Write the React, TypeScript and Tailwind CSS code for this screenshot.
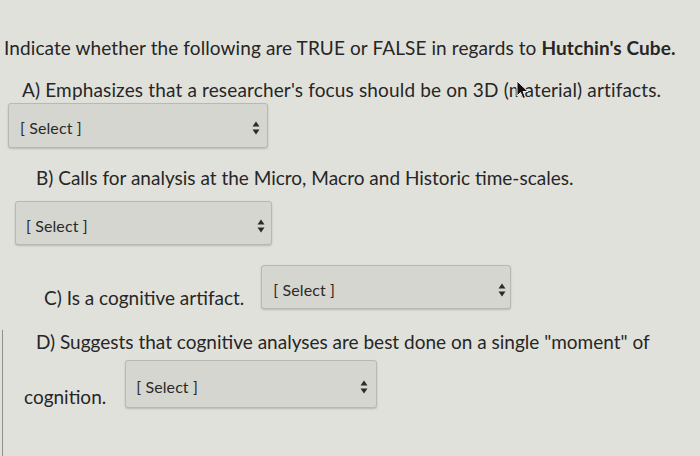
const font = { fontFamily: 'Lato, "Open Sans", sans-serif' };

function Arrows() {
  return (
    <svg width="8" height="14" viewBox="0 0 8 14" className="shrink-0">
      <path d="M4 0.5 L7.5 5.5 H0.5 Z" fill="#2b2b2b" />
      <path d="M4 13.5 L7.5 8.5 H0.5 Z" fill="#2b2b2b" />
    </svg>
  );
}

function SelectBox({ className }: { className: string }) {
  return (
    <div
      className={`flex items-center justify-between rounded-[3px] border border-[#b9b9b3] bg-[#d6d6d0] pt-[5px] shadow-[0_1px_2px_rgba(0,0,0,0.18)] ${className}`}
    >
      <span className="text-[16px] text-[#2a2a2a] tracking-[0.1px]">[ Select ]</span>
      <Arrows />
    </div>
  );
}

export default function App() {
  return (
    <div
      style={font}
      className="relative w-[700px] h-[456px] overflow-hidden bg-[#e1e1db] text-[#262626]"
    >
      <div className="absolute left-[2px] top-[330px] bottom-0 w-[1px] bg-[#8f8f8a]" />

      <div className="flex flex-col pt-[36px]">
        <p className="ml-[4px] text-[19px] leading-[24px] tracking-[0.1px]">
          Indicate whether the following are TRUE or FALSE in regards to{' '}
          <span className="font-bold">Hutchin's Cube.</span>
        </p>

        <p className="ml-[22px] mt-[18px] text-[19px] leading-[24px] tracking-[0.15px] relative">
          A) Emphasizes that a researcher's focus should be on 3D (material) artifacts.
          <svg
            width="14"
            height="20"
            viewBox="0 0 14 20"
            className="absolute left-[494px] top-[2px]"
          >
            <path
              d="M1 1 L1 16 L4.5 12.5 L7 18.5 L9.5 17.5 L7 11.5 L12 11.5 Z"
              fill="#111"
              stroke="#f0f0f0"
              strokeWidth="1"
            />
          </svg>
        </p>

        <SelectBox className="ml-[8px] mt-[1px] w-[260px] h-[45px] pl-[11px] pr-[7px]" />

        <p className="ml-[36px] mt-[18px] text-[19px] leading-[24px]">
          B) Calls for analysis at the Micro, Macro and Historic time-scales.
        </p>

        <SelectBox className="ml-[15px] mt-[11px] w-[257px] h-[44px] pl-[10px] pr-[6px]" />

        <div className="flex items-end mt-[20px]">
          <span className="ml-[44px] text-[19px] leading-[24px] mb-[-1px]">
            C) Is a cognitive artifact.
          </span>
          <SelectBox className="ml-[17px] w-[250px] h-[44px] pl-[11px] pr-[4px]" />
        </div>

        <p className="ml-[36px] mt-[21px] text-[19px] leading-[24px]">
          D) Suggests that cognitive analyses are best done on a single "moment" of
        </p>

        <div className="flex items-end mt-[6px]">
          <span className="ml-[24px] text-[19px] leading-[24px] mb-[-1px]">cognition.</span>
          <SelectBox className="ml-[19px] w-[252px] h-[48px] pl-[10px] pr-[8px]" />
        </div>
      </div>
    </div>
  );
}
